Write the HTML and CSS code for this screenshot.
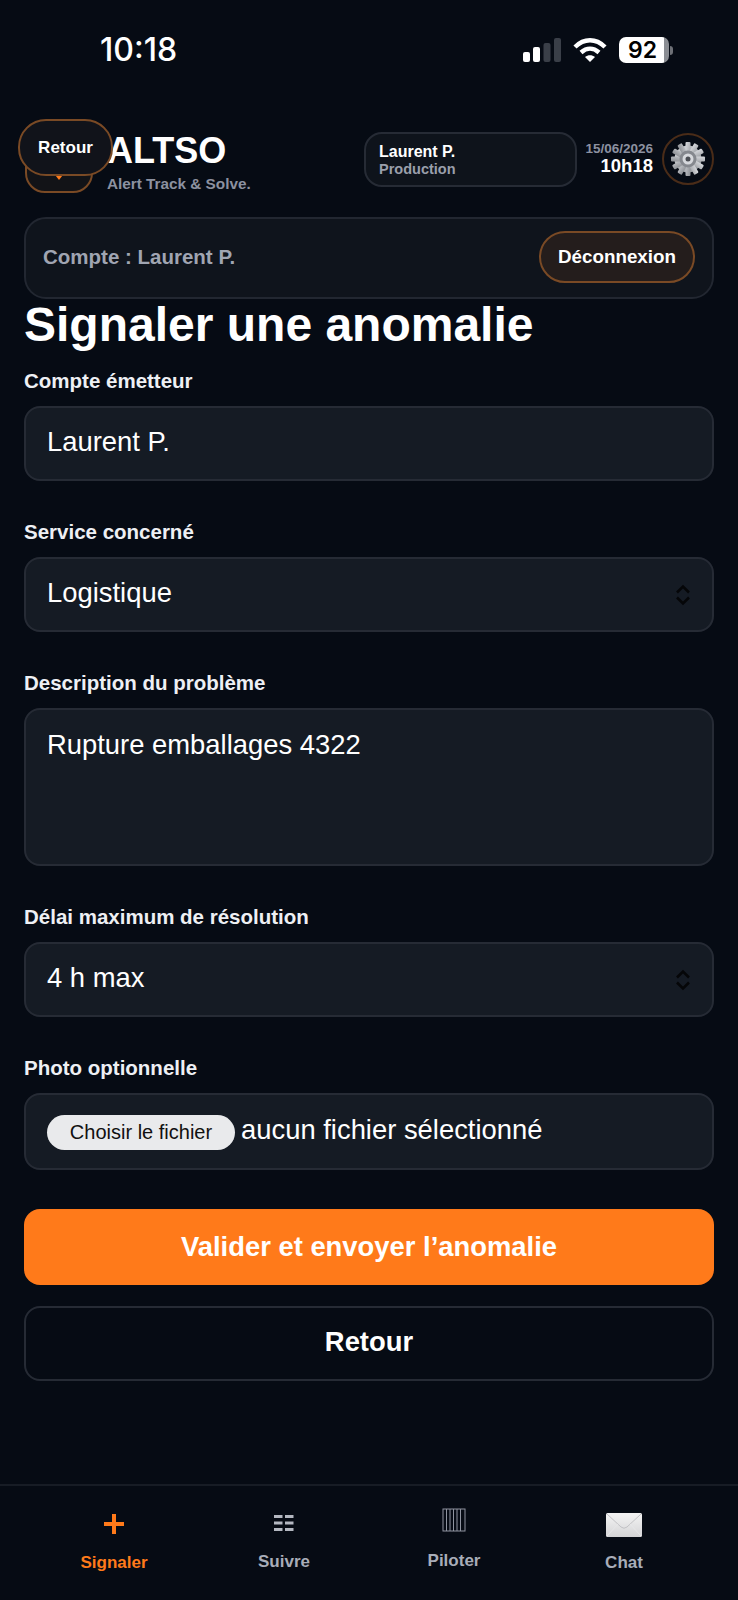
FILE: index.html
```html
<!DOCTYPE html>
<html lang="fr">
<head>
    <meta charset="UTF-8">
    <title>ALTSO - Signaler une anomalie</title>
    <link rel="stylesheet" href="styles.css">
</head>
<body>
    <div class="page">
        <div class="statusbar">
            <span class="clock">10:18</span>
            <div class="status-icons">
                <svg class="signal" width="38" height="24" viewBox="0 0 38 24">
                    <rect x="0" y="14" width="7" height="10" rx="2" fill="#fff"/>
                    <rect x="10" y="9" width="7" height="15" rx="2" fill="#fff"/>
                    <rect x="20.500" y="5" width="7" height="19" rx="2" fill="#3a3f48"/>
                    <rect x="31" y="0" width="7" height="24" rx="2" fill="#3a3f48"/>
                </svg>
                <svg class="wifi" width="34" height="26" viewBox="0 0 34 26">
                    <path d="M2 10 C11 1 23 1 32 10" fill="none" stroke="#fff" stroke-width="4.400"/>
                    <path d="M8 15.500 C13.500 10.500 20.500 10.500 26 15.500" fill="none" stroke="#fff" stroke-width="4.400"/>
                    <path d="M12 20 C15 17.500 19 17.500 22 20 L17 25 Z" fill="#fff"/>
                </svg>
                <div class="battery">
                    <div class="battery-body">92</div>
                    <div class="battery-tip"></div>
                </div>
            </div>
        </div>

        <header class="topbar">
            <div class="brand">
                <div class="logo-box">
                    <svg width="20" height="20" viewBox="0 0 20 20"><path d="M3 6 H17 L10 15 Z" fill="#ff7a1a"/></svg>
                </div>
                <div class="brand-text">
                    <div class="brand-name">ALTSO</div>
                    <div class="brand-sub">Alert Track &amp; Solve.</div>
                </div>
            </div>
            <div class="user-chip">
                <div class="user-name">Laurent P.</div>
                <div class="user-role">Production</div>
            </div>
            <div class="datetime">
                <div class="date">15/06/2026</div>
                <div class="time">10h18</div>
            </div>
            <div class="gear-btn">
                <svg width="36" height="36" viewBox="0 0 36 36">
                    <defs>
                        <linearGradient id="gearFill" x1="0" y1="0" x2="1" y2="1">
                            <stop offset="0" stop-color="#d8dade"/>
                            <stop offset="1" stop-color="#8b8e93"/>
                        </linearGradient>
                    </defs>
                    <g fill="url(#gearFill)">
                        <circle cx="18" cy="18" r="13.500"/>
                        <rect x="15.500" y="1" width="5" height="34" rx="1"/>
                        <rect x="15.500" y="1" width="5" height="34" rx="1" transform="rotate(30 18 18)"/>
                        <rect x="15.500" y="1" width="5" height="34" rx="1" transform="rotate(60 18 18)"/>
                        <rect x="15.500" y="1" width="5" height="34" rx="1" transform="rotate(90 18 18)"/>
                        <rect x="15.500" y="1" width="5" height="34" rx="1" transform="rotate(120 18 18)"/>
                        <rect x="15.500" y="1" width="5" height="34" rx="1" transform="rotate(150 18 18)"/>
                    </g>
                    <circle cx="18" cy="18" r="8.500" fill="#85888e"/>
                    <circle cx="18" cy="18" r="5.500" fill="#d6d8dc"/>
                    <circle cx="18" cy="18" r="2.500" fill="#4a4d53"/>
                </svg>
            </div>
            <button class="float-back">Retour</button>
        </header>

        <div class="account-card">
            <span class="account-label">Compte : Laurent P.</span>
            <button class="logout">Déconnexion</button>
        </div>

        <h1 class="title">Signaler une anomalie</h1>

        <form class="form">
            <div class="field">
                <label class="label">Compte émetteur</label>
                <div class="input">Laurent P.</div>
            </div>
            <div class="field">
                <label class="label">Service concerné</label>
                <div class="input select">
                    <span>Logistique</span>
                    <svg class="chevrons" width="16" height="22" viewBox="0 0 16 22"><path d="M2 8.500 L8 2.500 L14 8.500 M2 13.500 L8 19.500 L14 13.500" fill="none" stroke="#050608" stroke-width="2.600"/></svg>
                </div>
            </div>
            <div class="field">
                <label class="label">Description du problème</label>
                <div class="input textarea">Rupture emballages 4322</div>
            </div>
            <div class="field">
                <label class="label">Délai maximum de résolution</label>
                <div class="input select">
                    <span>4 h max</span>
                    <svg class="chevrons" width="16" height="22" viewBox="0 0 16 22"><path d="M2 8.500 L8 2.500 L14 8.500 M2 13.500 L8 19.500 L14 13.500" fill="none" stroke="#050608" stroke-width="2.600"/></svg>
                </div>
            </div>
            <div class="field">
                <label class="label">Photo optionnelle</label>
                <div class="input file">
                    <span class="file-btn">Choisir le fichier</span>
                    <span>aucun fichier sélectionné</span>
                </div>
            </div>
            <button type="button" class="btn-primary">Valider et envoyer l’anomalie</button>
            <button type="button" class="btn-secondary">Retour</button>
        </form>

        <nav class="tabbar">
            <div class="tab active tab-signaler">
                <svg width="22" height="22" viewBox="0 0 22 22"><path d="M11 1 V21 M1 11 H21" stroke="#ff7a1a" stroke-width="4"/></svg>
                <span>Signaler</span>
            </div>
            <div class="tab tab-suivre">
                <svg width="20" height="17" viewBox="0 0 20 17" fill="#b4b8c1">
                    <rect x="0" y="0" width="8.500" height="3"/><rect x="11" y="0" width="8.500" height="3"/>
                    <rect x="0" y="6.500" width="8.500" height="3"/><rect x="11" y="6.500" width="8.500" height="3"/>
                    <rect x="0" y="13" width="8.500" height="3"/><rect x="11" y="13" width="8.500" height="3"/>
                </svg>
                <span>Suivre</span>
            </div>
            <div class="tab tab-piloter">
                <svg width="24" height="24" viewBox="0 0 24 24" fill="none" stroke="#8f94a0" stroke-width="1">
                    <rect x="1" y="1" width="22" height="22"/>
                    <path d="M4.500 1 V23 M8 1 V23 M11.500 1 V23 M15 1 V23 M18.500 1 V23"/>
                </svg>
                <span>Piloter</span>
            </div>
            <div class="tab tab-chat">
                <svg width="36" height="24" viewBox="0 0 36 24">
                    <defs>
                        <linearGradient id="mailFill" x1="0" y1="0" x2="0" y2="1">
                            <stop offset="0" stop-color="#f4f4f4"/>
                            <stop offset="1" stop-color="#d4d4d6"/>
                        </linearGradient>
                    </defs>
                    <rect x="0" y="0" width="36" height="24" rx="1.500" fill="url(#mailFill)"/>
                    <path d="M1 1 L15 14 Q18 16.500 21 14 L35 1" fill="none" stroke="#c2c2c5" stroke-width="1"/>
                    <path d="M1 23 L12 11 M35 23 L24 11" fill="none" stroke="#e6e6e8" stroke-width="1"/>
                </svg>
                <span>Chat</span>
            </div>
        </nav>
    </div>
</body>
</html>
```

FILE: styles.css
```css
* {
    box-sizing: border-box;
}
body {
    margin: 0;
    background: #060b14;
    color: #fff;
    font-family: "Liberation Sans", Arial, sans-serif;
}
.page {
    width: 738px;
    height: 1600px;
    display: flex;
    flex-direction: column;
    overflow: hidden;
    background: #060b14;
}

/* barre iOS */
.statusbar {
    height: 100px;
    padding: 31px 65px 0 100px;
    display: flex;
    justify-content: space-between;
    align-items: flex-start;
}
.clock {
    font-family: Inter, sans-serif;
    font-size: 32px;
    font-weight: 500;
    line-height: 38px;
}
.status-icons {
    display: flex;
    align-items: center;
    gap: 12px;
    height: 38px;
}
.battery {
    display: flex;
    align-items: center;
    gap: 1px;
}
.battery-body {
    width: 50px;
    height: 26px;
    border-radius: 7px;
    background: linear-gradient(90deg, #fff 90%, #8a8d93 90%);
    color: #000;
    font-family: Inter, sans-serif;
    font-size: 23px;
    font-weight: 600;
    line-height: 26px;
    padding-left: 9px;
}
.battery-tip {
    width: 3px;
    height: 9px;
    border-radius: 0 3px 3px 0;
    background: #6d7076;
}

/* entete */
.topbar {
    position: relative;
    height: 117px;
    padding: 32px 24px 0 25px;
    display: flex;
    align-items: flex-start;
}
.brand {
    display: flex;
    align-items: flex-start;
    width: 339px;
}
.logo-box {
    width: 68px;
    height: 56px;
    margin-top: 5px;
    border: 2px solid #7a4a25;
    border-radius: 20px;
    background: #121317;
    display: flex;
    align-items: flex-end;
    justify-content: center;
    padding-bottom: 6px;
}
.brand-text {
    margin-left: 14px;
}
.brand-name {
    font-size: 36px;
    font-weight: bold;
    line-height: 38px;
}
.brand-sub {
    font-size: 15.300px;
    font-weight: bold;
    color: #8c91a0;
    line-height: 18px;
    margin-top: 5px;
}
.user-chip {
    width: 213px;
    height: 55px;
    border: 2px solid #262b35;
    border-radius: 18px;
    background: #0e131b;
    padding: 9px 13px;
}
.user-name {
    font-size: 16px;
    font-weight: bold;
    line-height: 18px;
}
.user-role {
    font-size: 14.500px;
    font-weight: bold;
    color: #9a9fab;
    line-height: 17px;
}
.datetime {
    width: 76px;
    text-align: right;
    margin-top: 9px;
}
.date {
    font-size: 13.500px;
    font-weight: bold;
    color: #8c91a0;
    line-height: 15px;
    margin-left: -6px;
    white-space: nowrap;
}
.time {
    font-size: 18.500px;
    font-weight: bold;
    line-height: 19px;
}
.gear-btn {
    width: 52px;
    height: 52px;
    margin-left: 9px;
    margin-top: 1px;
    border: 2px solid #4a2c18;
    border-radius: 50%;
    display: flex;
    align-items: center;
    justify-content: center;
}
.float-back {
    position: absolute;
    left: 18px;
    top: 19px;
    width: 95px;
    height: 57px;
    border: 2px solid #7a4a25;
    border-radius: 28px;
    background: #11131a;
    color: #fff;
    font-family: inherit;
    font-size: 17px;
    font-weight: bold;
    padding: 0;
}

/* compte */
.account-card {
    margin: 0 24px 0 24px;
    height: 82px;
    border: 2px solid #222731;
    border-radius: 22px;
    background: #0f141c;
    padding: 0 17px 2px;
    display: flex;
    align-items: center;
    justify-content: space-between;
    flex-shrink: 0;
}
.account-label {
    font-size: 20.500px;
    font-weight: bold;
    color: #a0a5b2;
}
.logout {
    width: 156px;
    height: 52px;
    border: 2px solid #7a4a25;
    border-radius: 26px;
    background: #241d1c;
    color: #fff;
    font-family: inherit;
    font-size: 18.800px;
    font-weight: bold;
    padding: 0;
}
.title {
    margin: -2px 24px 0;
    font-size: 48px;
    font-weight: bold;
    line-height: 55px;
}

/* formulaire */
.form {
    margin: 0 24px;
    padding-top: 17px;
    display: flex;
    flex-direction: column;
}
.field {
    margin-bottom: 39px;
}
.label {
    display: block;
    font-size: 20.500px;
    font-weight: bold;
    color: #eef0f4;
    line-height: 23px;
    margin-bottom: 14px;
}
.input {
    height: 75px;
    border: 2px solid #262b35;
    border-radius: 16px;
    background: #151b24;
    color: #fff;
    font-size: 27.400px;
    padding: 0 21px 3px;
    display: flex;
    align-items: center;
}
.select {
    justify-content: space-between;
    padding-right: 21px;
}
.select .chevrons {
    margin-top: 3px;
}
.textarea {
    height: 158px;
    align-items: flex-start;
    padding-top: 19px;
}
.file {
    height: 77px;
    gap: 6px;
}
.file-btn {
    width: 188px;
    height: 35px;
    margin-top: 4px;
    border-radius: 18px;
    background: #e9eaec;
    color: #111;
    font-size: 20px;
    line-height: 35px;
    text-align: center;
}
.btn-primary, .btn-secondary {
    height: 76px;
    border-radius: 16px;
    color: #fff;
    font-family: inherit;
    font-size: 27.400px;
    font-weight: bold;
}
.btn-primary {
    border: none;
    background: #ff7a1a;
}
.btn-secondary {
    height: 75px;
    margin-top: 21px;
    padding-bottom: 4px;
    border: 2px solid #262b35;
    background: transparent;
}

/* onglets */
.tabbar {
    margin-top: auto;
    height: 116px;
    padding-left: 29px;
    border-top: 2px solid #171c25;
    display: grid;
    grid-template-columns: repeat(4, 170px);
}
.tab {
    display: flex;
    flex-direction: column;
    align-items: center;
    font-size: 17px;
    font-weight: bold;
    color: #a8adb8;
}
.tab.active {
    color: #ff7a1a;
}
.tab-signaler {
    padding-top: 27px;
    gap: 18px;
}
.tab-suivre {
    padding-top: 29px;
    gap: 20px;
}
.tab-piloter {
    padding-top: 22px;
    gap: 19px;
}
.tab-chat {
    padding-top: 27px;
    gap: 16px;
}
```
